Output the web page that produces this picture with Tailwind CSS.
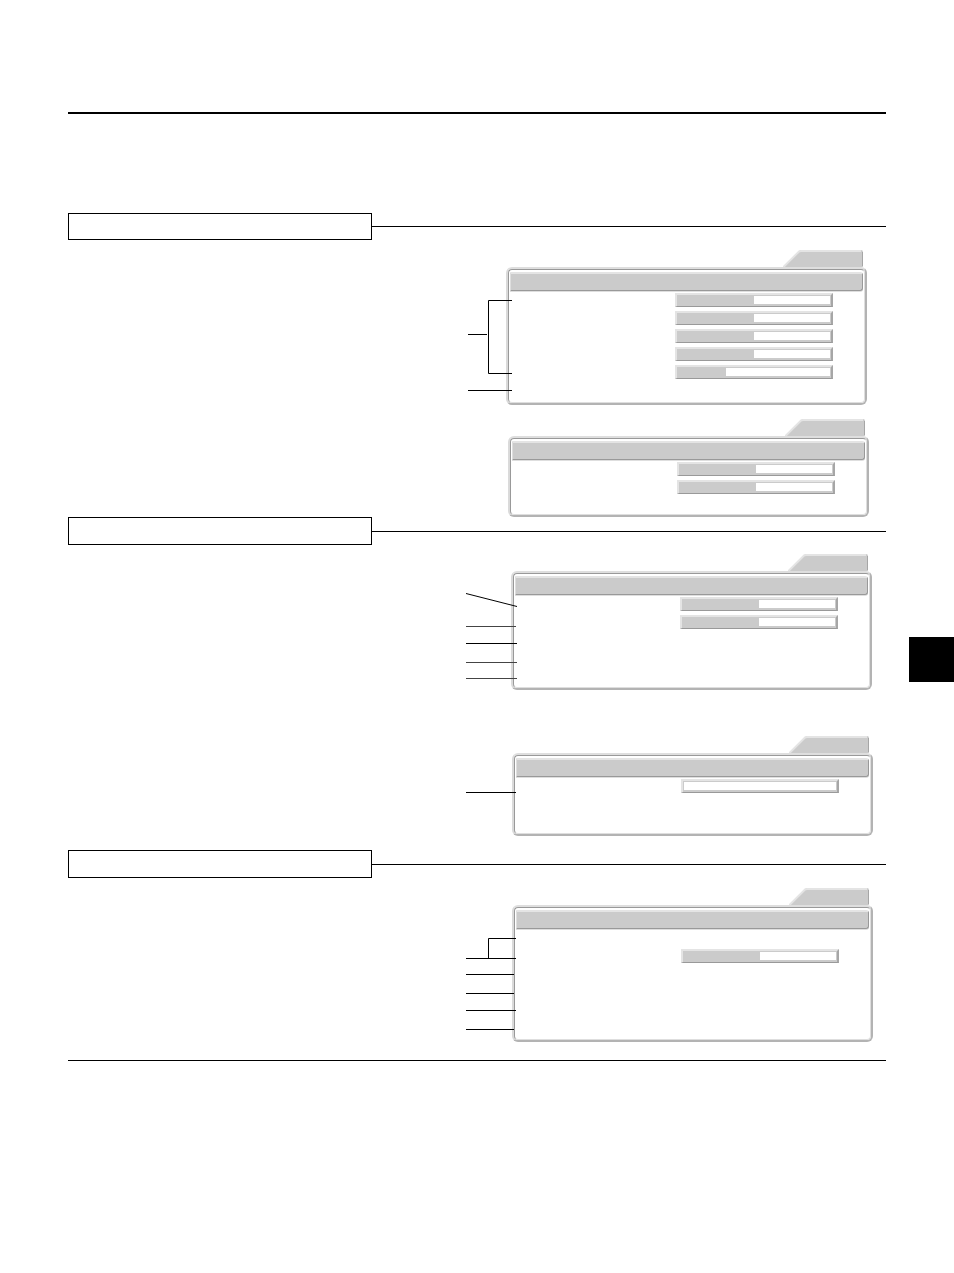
<!DOCTYPE html>
<html lang="en">
<head>
  <meta charset="UTF-8" />
  <meta name="viewport" content="width=device-width, initial-scale=1.0"/>
  <title>Menu panels</title>
  <script src="https://cdn.jsdelivr.net/npm/@tailwindcss/browser@4"></script>
</head>
<body class="relative bg-white min-h-screen px-[68px] pt-28 font-['Liberation_Sans',sans-serif]">

  <!-- folder tab, shared by all panels -->
  <svg class="hidden">
    <symbol id="tab" viewBox="0 0 80 17">
      <path d="M0 17 L16 1 Q17 0 18 0 H78 Q80 0 80 2 V17 Z" fill="#cbcbcb"/>
      <path d="M0.5 17 L16 1.5 Q17 1 18 1 H78" fill="none" stroke="#e4e4e4" stroke-width="2"/>
      <path d="M79.5 2 V16" fill="none" stroke="#a6a6a6"/>
    </symbol>
  </svg>

  <hr class="border-0 h-[2px] bg-black" />

  <main class="mt-[99px] border-b border-black pb-[18px]">
    <section class="flex flex-col">
      <div class="flex items-center">
        <div class="w-[304px] h-[27px] border border-black"></div>
        <div class="flex-1 h-px bg-black"></div>
      </div>

      <figure class="relative self-end w-[361px] mt-[10px] mr-[19px]">
        <svg class="ml-auto mr-1 w-20 h-[17px]"><use href="#tab"/></svg>
        <div class="border-2 border-t-[#dedede] border-l-[#dadada] border-r-[#b3b3b3] border-b-[#b3b3b3] rounded-md">
          <div class="h-[134px] border border-t-[#999] border-l-[#999] border-r-[#dedede] border-b-[#dedede] rounded-sm px-px pt-[2px]">
            <div class="h-[19px] bg-[#cbcbcb] border-t-2 border-l border-r border-b border-t-[#e4e4e4] border-l-[#dedede] border-r-[#999] border-b-[#999] rounded-r-[3px] shadow-[0_1px_0_#dedede]"></div>
            <div class="mt-[2px] ml-[165px] w-[158px] grid gap-1">
              <div class="border-2 border-b border-t-[#e4e4e4] border-l-[#e4e4e4] border-r-[#a6a6a6] border-b-[#999] bg-[#cbcbcb] p-px pb-[2px]"><input type="range" value="50" aria-label="Level 1" class="block w-full h-2 appearance-none bg-[linear-gradient(to_right,#cbcbcb_50%,#fff_50%)] [&::-webkit-slider-thumb]:appearance-none" /></div>
              <div class="border-2 border-b border-t-[#e4e4e4] border-l-[#e4e4e4] border-r-[#a6a6a6] border-b-[#999] bg-[#cbcbcb] p-px pb-[2px]"><input type="range" value="50" aria-label="Level 2" class="block w-full h-2 appearance-none bg-[linear-gradient(to_right,#cbcbcb_50%,#fff_50%)] [&::-webkit-slider-thumb]:appearance-none" /></div>
              <div class="border-2 border-b border-t-[#e4e4e4] border-l-[#e4e4e4] border-r-[#a6a6a6] border-b-[#999] bg-[#cbcbcb] p-px pb-[2px]"><input type="range" value="50" aria-label="Level 3" class="block w-full h-2 appearance-none bg-[linear-gradient(to_right,#cbcbcb_50%,#fff_50%)] [&::-webkit-slider-thumb]:appearance-none" /></div>
              <div class="border-2 border-b border-t-[#e4e4e4] border-l-[#e4e4e4] border-r-[#a6a6a6] border-b-[#999] bg-[#cbcbcb] p-px pb-[2px]"><input type="range" value="50" aria-label="Level 4" class="block w-full h-2 appearance-none bg-[linear-gradient(to_right,#cbcbcb_50%,#fff_50%)] [&::-webkit-slider-thumb]:appearance-none" /></div>
              <div class="border-2 border-b border-t-[#e4e4e4] border-l-[#e4e4e4] border-r-[#a6a6a6] border-b-[#999] bg-[#cbcbcb] p-px pb-[2px]"><input type="range" value="32" aria-label="Level 5" class="block w-full h-2 appearance-none bg-[linear-gradient(to_right,#cbcbcb_48px,#fff_48px)] [&::-webkit-slider-thumb]:appearance-none" /></div>
            </div>
          </div>
        </div>
        <svg class="absolute top-0 -left-[46px] w-16 h-[155px] pointer-events-none" fill="none" stroke="#000">
          <path d="M52 50.5 H28.5 V123.5 H52 M8 84.5 H27 M8 140.5 H52"/>
        </svg>
      </figure>

      <figure class="self-end w-[361px] mt-[14px] mr-[17px]">
        <svg class="ml-auto mr-1 w-20 h-[17px]"><use href="#tab"/></svg>
        <div class="border-2 border-t-[#dedede] border-l-[#dadada] border-r-[#b3b3b3] border-b-[#b3b3b3] rounded-md">
          <div class="h-[77px] border border-t-[#999] border-l-[#999] border-r-[#dedede] border-b-[#dedede] rounded-sm px-px pt-[2px]">
            <div class="h-[19px] bg-[#cbcbcb] border-t-2 border-l border-r border-b border-t-[#e4e4e4] border-l-[#dedede] border-r-[#999] border-b-[#999] rounded-r-[3px] shadow-[0_1px_0_#dedede]"></div>
            <div class="mt-[2px] ml-[165px] w-[158px] grid gap-1">
              <div class="border-2 border-b border-t-[#e4e4e4] border-l-[#e4e4e4] border-r-[#a6a6a6] border-b-[#999] bg-[#cbcbcb] p-px pb-[2px]"><input type="range" value="50" aria-label="Level 6" class="block w-full h-2 appearance-none bg-[linear-gradient(to_right,#cbcbcb_50%,#fff_50%)] [&::-webkit-slider-thumb]:appearance-none" /></div>
              <div class="border-2 border-b border-t-[#e4e4e4] border-l-[#e4e4e4] border-r-[#a6a6a6] border-b-[#999] bg-[#cbcbcb] p-px pb-[2px]"><input type="range" value="50" aria-label="Level 7" class="block w-full h-2 appearance-none bg-[linear-gradient(to_right,#cbcbcb_50%,#fff_50%)] [&::-webkit-slider-thumb]:appearance-none" /></div>
            </div>
          </div>
        </div>
      </figure>
    </section>

    <section class="flex flex-col">
      <div class="flex items-center">
        <div class="w-[304px] h-[28px] border border-black"></div>
        <div class="flex-1 h-px bg-black"></div>
      </div>

      <figure class="relative self-end w-[361px] mt-[9px] mr-[14px]">
        <svg class="ml-auto mr-1 w-20 h-[17px]"><use href="#tab"/></svg>
        <div class="border-2 border-t-[#dedede] border-l-[#dadada] border-r-[#b3b3b3] border-b-[#b3b3b3] rounded-md">
          <div class="h-[115px] border border-t-[#999] border-l-[#999] border-r-[#dedede] border-b-[#dedede] rounded-sm px-px pt-[2px]">
            <div class="h-[19px] bg-[#cbcbcb] border-t-2 border-l border-r border-b border-t-[#e4e4e4] border-l-[#dedede] border-r-[#999] border-b-[#999] rounded-r-[3px] shadow-[0_1px_0_#dedede]"></div>
            <div class="mt-[2px] ml-[165px] w-[158px] grid gap-1">
              <div class="border-2 border-b border-t-[#e4e4e4] border-l-[#e4e4e4] border-r-[#a6a6a6] border-b-[#999] bg-[#cbcbcb] p-px pb-[2px]"><input type="range" value="50" aria-label="Level 8" class="block w-full h-2 appearance-none bg-[linear-gradient(to_right,#cbcbcb_50%,#fff_50%)] [&::-webkit-slider-thumb]:appearance-none" /></div>
              <div class="border-2 border-b border-t-[#e4e4e4] border-l-[#e4e4e4] border-r-[#a6a6a6] border-b-[#999] bg-[#cbcbcb] p-px pb-[2px]"><input type="range" value="50" aria-label="Level 9" class="block w-full h-2 appearance-none bg-[linear-gradient(to_right,#cbcbcb_50%,#fff_50%)] [&::-webkit-slider-thumb]:appearance-none" /></div>
            </div>
          </div>
        </div>
        <svg class="absolute top-0 -left-[45px] w-16 h-[136px] pointer-events-none" fill="none" stroke="#000">
          <path d="M0 39.5 L51 52.5 M0 89.5 H51"/>
          <path d="M0 72.5 H50 M0 108.5 H51 M0 124.5 H51" stroke="#444"/>
        </svg>
      </figure>

      <figure class="relative self-end w-[361px] mt-[46px] mr-[13px]">
        <svg class="ml-auto mr-1 w-20 h-[17px]"><use href="#tab"/></svg>
        <div class="border-2 border-t-[#dedede] border-l-[#dadada] border-r-[#b3b3b3] border-b-[#b3b3b3] rounded-md">
          <div class="h-[79px] border border-t-[#999] border-l-[#999] border-r-[#dedede] border-b-[#dedede] rounded-sm px-px pt-[2px]">
            <div class="h-[19px] bg-[#cbcbcb] border-t-2 border-l border-r border-b border-t-[#e4e4e4] border-l-[#dedede] border-r-[#999] border-b-[#999] rounded-r-[3px] shadow-[0_1px_0_#dedede]"></div>
            <div class="mt-[2px] ml-[165px] w-[158px]">
              <div class="border-2 border-b border-t-[#e4e4e4] border-l-[#e4e4e4] border-r-[#a6a6a6] border-b-[#999] bg-[#cbcbcb] p-px pb-[2px]"><input type="range" value="0" aria-label="Level 10" class="block w-full h-2 appearance-none bg-white [&::-webkit-slider-thumb]:appearance-none" /></div>
            </div>
          </div>
        </div>
        <svg class="absolute top-0 -left-[46px] w-16 h-[100px] pointer-events-none" fill="none" stroke="#000">
          <path d="M0 56.5 H50"/>
        </svg>
      </figure>
    </section>

    <section class="flex flex-col mt-[14px]">
      <div class="flex items-center">
        <div class="w-[304px] h-[28px] border border-black"></div>
        <div class="flex-1 h-px bg-black"></div>
      </div>

      <figure class="relative self-end w-[361px] mt-[10px] mr-[13px]">
        <svg class="ml-auto mr-1 w-20 h-[17px]"><use href="#tab"/></svg>
        <div class="border-2 border-t-[#dedede] border-l-[#dadada] border-r-[#b3b3b3] border-b-[#b3b3b3] rounded-md">
          <div class="h-[133px] border border-t-[#999] border-l-[#999] border-r-[#dedede] border-b-[#dedede] rounded-sm px-px pt-[2px]">
            <div class="h-[19px] bg-[#cbcbcb] border-t-2 border-l border-r border-b border-t-[#e4e4e4] border-l-[#dedede] border-r-[#999] border-b-[#999] rounded-r-[3px] shadow-[0_1px_0_#dedede]"></div>
            <div class="mt-5 ml-[165px] w-[158px]">
              <div class="border-2 border-b border-t-[#e4e4e4] border-l-[#e4e4e4] border-r-[#a6a6a6] border-b-[#999] bg-[#cbcbcb] p-px pb-[2px]"><input type="range" value="50" aria-label="Level 11" class="block w-full h-2 appearance-none bg-[linear-gradient(to_right,#cbcbcb_50%,#fff_50%)] [&::-webkit-slider-thumb]:appearance-none" /></div>
            </div>
          </div>
        </div>
        <svg class="absolute top-0 -left-[46px] w-16 h-[154px] pointer-events-none" fill="none" stroke="#000">
          <path d="M50 50.5 H22.5 V70.5 M0 70.5 H50 M0 86.5 H48 M0 105.5 H48 M0 122.5 H50 M0 141.5 H48"/>
        </svg>
      </figure>
    </section>
  </main>

  <!-- chapter marker on the page edge -->
  <div class="absolute right-0 top-[637px] size-[45px] bg-black"></div>

</body>
</html>
